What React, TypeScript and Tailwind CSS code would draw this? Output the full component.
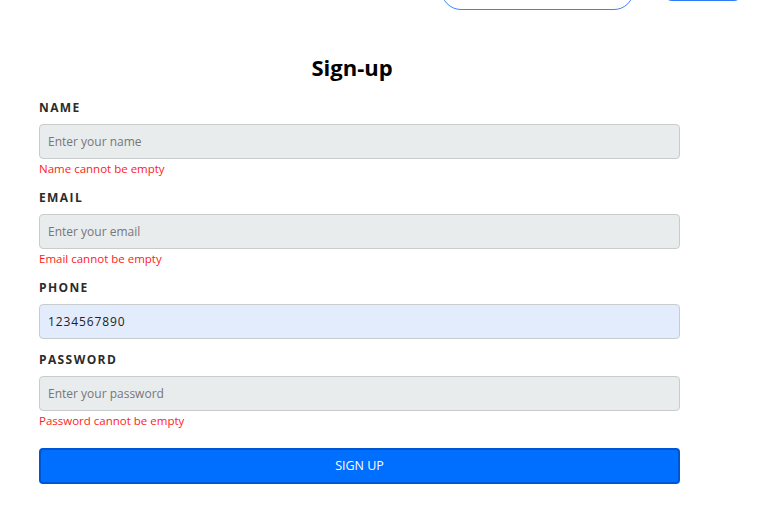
import React from "react";

const font = { fontFamily: "'Open Sans', 'Noto Sans', sans-serif" };

function Field({ label, placeholder, value, error, autofill }: { label: string; placeholder: string; value?: string; error?: string; autofill?: boolean }) {
  return (
    <div className="flex flex-col">
      <label className="text-[12px] leading-[18px] font-bold tracking-[1.4px] text-[#2b2b2b] mb-[7px]">{label}</label>
      <input
        readOnly
        placeholder={placeholder}
        defaultValue={value}
        className={`h-[35px] w-full rounded-[4px] border border-[#c9cccd] px-[8px] text-[12px] text-[#222] placeholder:text-[#777] outline-none ${autofill ? "bg-[#e3ecfd] tracking-[0.9px]" : "bg-[#e8eced]"}`}
        style={font}
      />
      {error ? (
        <div className="text-[11.5px] leading-[17px] text-[#ff1a1a] mt-[1px]">{error}</div>
      ) : null}
    </div>
  );
}

export default function App() {
  return (
    <div className="w-[768px] h-[526px] bg-white overflow-hidden" style={font}>
      <div className="flex justify-end pr-[26px] h-[40px] -mt-[30px] gap-[30px] items-start">
        <div className="w-[193px] h-[40px] rounded-[20px] border border-[#3b82f6]" />
        <div className="w-[78px] h-[31px] rounded-[8px] border-2 border-[#2f7cf6]" />
      </div>
      <div className="ml-[39px] w-[641px]">
        <h1 className="text-[22px] leading-[28px] font-bold text-black text-center pr-[15px] mt-[43px]">Sign-up</h1>
        <div className="flex flex-col gap-[12px] mt-[18px]">
          <Field label="NAME" placeholder="Enter your name" error="Name cannot be empty" />
          <Field label="EMAIL" placeholder="Enter your email" error="Email cannot be empty" />
          <Field label="PHONE" placeholder="Enter your phone" value="1234567890" autofill />
          <Field label="PASSWORD" placeholder="Enter your password" error="Password cannot be empty" />
        </div>
        <button className="mt-[19px] h-[36px] w-full rounded-[4px] border-2 border-[#0056d0] bg-[#006eff] text-white text-[12.5px]" style={font}>
          SIGN UP
        </button>
      </div>
    </div>
  );
}
